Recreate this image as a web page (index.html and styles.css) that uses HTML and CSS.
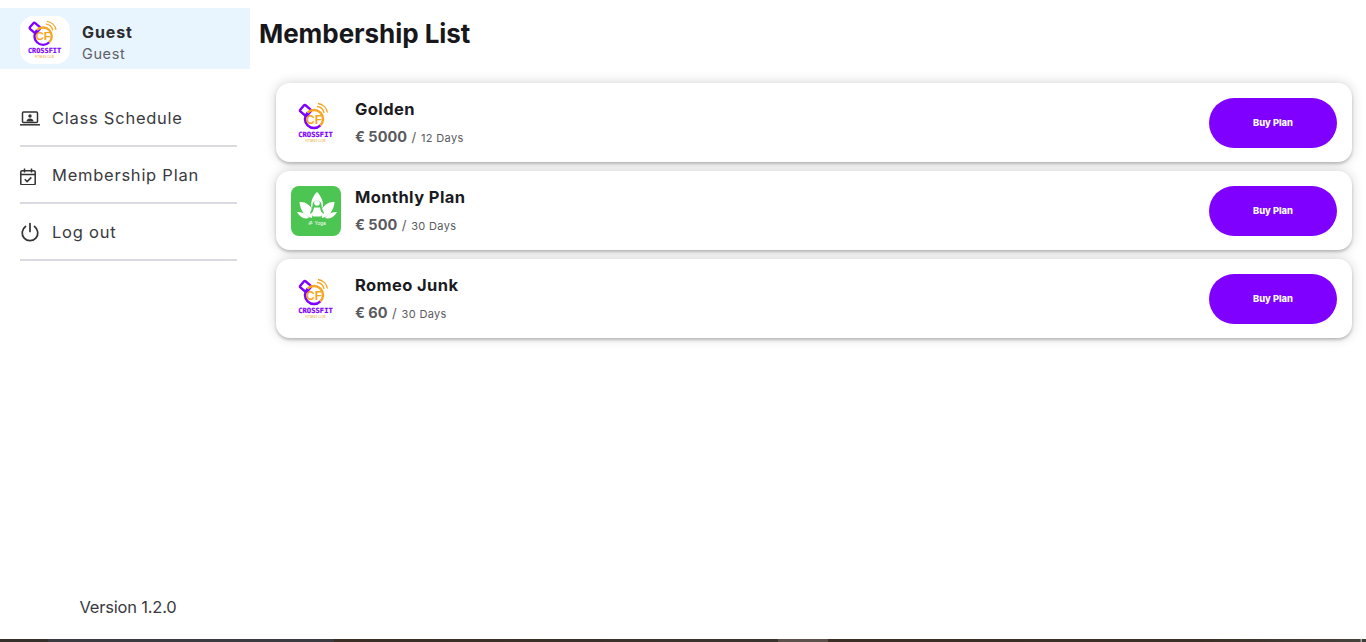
FILE: index.html
```html
<!DOCTYPE html>
<html lang="en">
<head>
<meta charset="utf-8">
<title>Membership List</title>
<link rel="stylesheet" href="styles.css">
</head>
<body>
<svg class="defs" width="0" height="0" aria-hidden="true">
  <defs>
    <symbol id="crossfit" viewBox="0 0 50 50">
      <g fill="none" stroke-width="2.400">
        <rect x="10" y="8.500" width="9" height="8" rx="1.500" transform="rotate(40 14.500 12.500)" stroke="#7f00ff"/>
        <path d="M29.400 27.400A9 9 0 0 1 16.600 14.600" stroke="#7f00ff"/>
        <path d="M16.600 14.600A9 9 0 0 1 29.400 27.400" stroke="#f5a623"/>
        <path d="M26 8.500a8 8 0 0 1 7 6.500M27 5.500a11 11 0 0 1 9.500 9" stroke="#f5a623" stroke-width="1.300"/>
      </g>
      <text x="23" y="25.500" class="logo-cf">CF</text>
      <text x="24.500" y="39" class="logo-name">CROSSFIT</text>
      <text x="24.500" y="43.500" class="logo-tag">FITNESS CLUB</text>
    </symbol>
  </defs>
</svg>
<div class="app">
  <aside class="sidebar">
    <div class="profile">
      <div class="avatar"><svg class="logo-svg"><use href="#crossfit"/></svg></div>
      <div class="profile-text">
        <div class="profile-name">Guest</div>
        <div class="profile-role">Guest</div>
      </div>
    </div>
    <nav class="menu">
      <a class="menu-item">
        <svg class="menu-icon" viewBox="0 0 20 20" fill="none" stroke="#333" stroke-width="1.500">
          <rect x="2.500" y="4" width="15" height="10.500" rx="1"/>
          <path d="M0 16.800h20"/>
          <circle cx="10" cy="8" r="1.700" fill="#333" stroke="none"/>
          <path d="M6.500 13.500c0-2 1.600-3 3.500-3s3.500 1 3.500 3z" fill="#333" stroke="none"/>
        </svg>
        <span>Class Schedule</span>
      </a>
      <a class="menu-item">
        <svg class="menu-icon" viewBox="2 -2 20 20" fill="none" stroke="#333" stroke-width="1.500">
          <rect x="2.800" y="3.800" width="14.400" height="14" rx="1.200"/>
          <path d="M2.800 7.500h14.400M6.500 1.500v4M13.500 1.500v4"/>
          <path d="M6.800 12.300l2.300 2.300 4.200-4.200"/>
        </svg>
        <span>Membership Plan</span>
      </a>
      <a class="menu-item">
        <svg class="menu-icon" viewBox="0 0 20 20" fill="none" stroke="#333" stroke-width="1.700" stroke-linecap="round">
          <path d="M10 1.500v8"/>
          <path d="M5.500 4.500a7.800 7.800 0 1 0 9 0"/>
        </svg>
        <span>Log out</span>
      </a>
    </nav>
    <div class="version">Version 1.2.0</div>
  </aside>
  <main class="content">
    <h1 class="title">Membership List</h1>
    <div class="plans">
      <article class="plan">
        <svg class="plan-logo"><use href="#crossfit"/></svg>
        <div class="plan-info">
          <div class="plan-name">Golden</div>
          <div class="plan-meta"><b>€ 5000</b> <i>/</i> <span>12 Days</span></div>
        </div>
        <button class="buy">Buy Plan</button>
      </article>
      <article class="plan">
        <svg class="plan-logo" viewBox="0 0 50 50">
          <rect width="50" height="50" rx="8" fill="#4cc552"/>
          <g fill="#fff">
            <path d="M26 6c3.500 3.500 6 8 6 14l-2 5h-8l-2-5c0-6 2.500-10.500 6-14z"/>
            <path d="M8.500 16c6-.5 11 3 13.500 9l-1 7c-7-1-12-8-12.500-16zM43.500 16c-6-.5-11 3-13.500 9l1 7c7-1 12-8 12.500-16z"/>
            <path d="M6 26c5-.5 9 1.500 12 6-5 1.500-9-.5-12-6zM46 26c-5-.5-9 1.500-12 6 5 1.500 9-.5 12-6z"/>
          </g>
          <path d="M21.500 19a4.500 4.500 0 1 1 9 0c0 2 1 5 2.500 8l-3 3.500h-8L19 27c1.500-3 2.500-6 2.500-8z" fill="#4cc552"/>
          <circle cx="26" cy="17" r="2.800" fill="#fff"/>
          <path d="M23 21.500h6l1 4 2.500 2.500-3 2.500h-7l-3-2.500 2.500-2.500z" fill="#fff"/>
          <text x="26" y="39" class="logo-yoga">ॐ Yoga</text>
        </svg>
        <div class="plan-info">
          <div class="plan-name">Monthly Plan</div>
          <div class="plan-meta"><b>€ 500</b> <i>/</i> <span>30 Days</span></div>
        </div>
        <button class="buy">Buy Plan</button>
      </article>
      <article class="plan">
        <svg class="plan-logo"><use href="#crossfit"/></svg>
        <div class="plan-info">
          <div class="plan-name">Romeo Junk</div>
          <div class="plan-meta"><b>€ 60</b> <i>/</i> <span>30 Days</span></div>
        </div>
        <button class="buy">Buy Plan</button>
      </article>
    </div>
  </main>
</div>
<div class="strip"></div>
</body>
</html>
```
FILE: styles.css
```css
* { box-sizing: border-box; }
html, body { height: 100%; }
body {
  margin: 0;
  height: 642px;
  overflow: hidden;
  display: flex;
  flex-direction: column;
  background: #fff;
  font-family: "Inter", "Open Sans", "Liberation Sans", sans-serif;
  color: #1b1b22;
}
.defs { position: absolute; }
.app { flex: 1; display: flex; min-height: 0; }
.strip {
  height: 3px;
  background: linear-gradient(90deg, #35302a 0, #35302a 48px, #3a3b40 48px, #3a3b40 334px, #3a2e25 334px, #3a342e 778px, #5c514b 778px, #5c514b 828px, #3a2e25 828px, #3b3026 1200px, #45423c 1360px, #aaa 1361px, #aaa 1362px, #3f3d38 1362px);
}
.sidebar {
  width: 250px;
  flex: none;
  padding-top: 8px;
  display: flex;
  flex-direction: column;
}
.profile {
  height: 61px;
  background: #e8f5fe;
  padding: 8px 20px 0;
  display: flex;
  align-items: flex-start;
  gap: 12px;
}
.avatar {
  width: 50px;
  height: 48px;
  background: #fff;
  border-radius: 14px;
  flex: none;
}
.logo-svg { display: block; width: 50px; height: 48px; }
.profile-text { padding-top: 6px; }
.profile-name { font-size: 16px; font-weight: 700; line-height: 20px; color: #2c2c30; letter-spacing: .9px; }
.profile-role { font-size: 14.500px; line-height: 20px; margin-top: 2px; color: #5f5f66; letter-spacing: .6px; }
.menu { margin-top: 21px; padding-right: 13px; }
.menu-item {
  height: 57px;
  margin-left: 20px;
  border-bottom: 2px solid #dcd9e3;
  display: flex;
  align-items: center;
  gap: 12px;
  font-size: 16.500px;
  color: #3a3a40;
  letter-spacing: .75px;
}
.menu-icon { width: 20px; height: 20px; flex: none; }
.version {
  margin-top: auto;
  margin-bottom: 22px;
  text-align: center;
  padding-left: 6px;
  font-size: 16.500px;
  line-height: 20px;
  color: #3a3a40;
  letter-spacing: -.2px;
}
.content { flex: 1; min-width: 0; padding: 0 14px 0 9px; }
.title {
  margin: 0;
  height: 83px;
  padding-top: 18px;
  font-size: 26px;
  line-height: 32px;
  font-weight: 700;
  color: #17171c;
  letter-spacing: -.05px;
}
.plans { margin-left: 17px; display: flex; flex-direction: column; gap: 9px; }
.plan {
  height: 79px;
  background: #fff;
  border-radius: 14px;
  box-shadow: 0 2px 3px rgba(0, 0, 0, .2), 0 0 12px rgba(0, 0, 0, .18);
  padding: 0 15px;
  display: flex;
  align-items: center;
}
.plan-logo { width: 50px; height: 50px; flex: none; display: block; }
.plan-info { flex: 1; margin-left: 14px; padding-top: 2px; }
.plan-name { font-size: 16.500px; line-height: 20px; font-weight: 700; color: #1b1b22; letter-spacing: .4px; }
.plan-meta { margin-top: 8px; line-height: 20px; color: #5a5a60; font-size: 11px; letter-spacing: .35px; }
.plan-meta b { font-size: 14.500px; font-weight: 700; letter-spacing: 0; }
.plan-meta i { font-style: normal; font-size: 13px; margin: 0 1px; }
.buy {
  width: 128px;
  height: 50px;
  flex: none;
  border: 0;
  border-radius: 25px;
  background: #7f00ff;
  color: #fff;
  font-family: inherit;
  font-size: 9.300px;
  font-weight: 800;
  padding: 0;
}
.logo-cf { font-family: "Liberation Sans", sans-serif; font-size: 12px; font-weight: 700; fill: #f5a623; text-anchor: middle; }
.logo-name { font-family: "DejaVu Sans Mono", monospace; font-size: 7.200px; font-weight: 700; fill: #7f00ff; stroke: #7f00ff; stroke-width: .2px; text-anchor: middle; }
.logo-tag { font-family: "Liberation Sans", sans-serif; font-size: 2.800px; fill: #f5a623; text-anchor: middle; }
.logo-yoga { font-family: "Liberation Sans", sans-serif; font-size: 5px; fill: #fff; text-anchor: middle; }
```
